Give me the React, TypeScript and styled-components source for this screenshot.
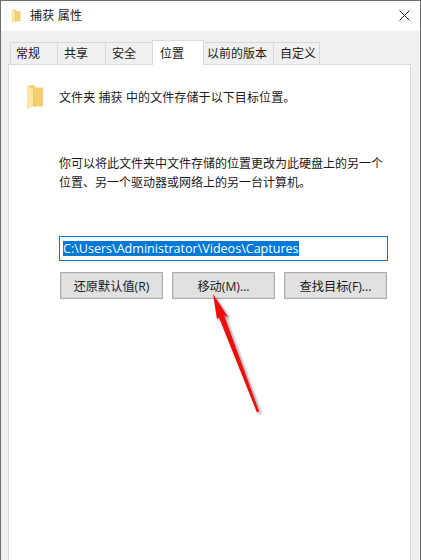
import React from 'react';
import styled, { createGlobalStyle } from 'styled-components';

const GlobalStyle = createGlobalStyle`
  html, body {
    margin: 0;
    padding: 0;
    background: #fff;
  }
`;

const Window = styled.div`
  position: relative;
  width: 421px;
  height: 560px;
  box-sizing: border-box;
  display: flex;
  flex-direction: column;
  overflow: hidden;
  background: #f0f0f0;
  border: 1px solid #6d6d6d;
  border-bottom: none;
  font-family: "Open Sans", "Noto Sans CJK SC", sans-serif;
  font-size: 12px;
  color: #1a1a1a;
`;

const TitleBar = styled.div`
  height: 30px;
  flex: none;
  display: flex;
  align-items: center;
  gap: 9px;
  padding: 0 10px 0 10px;
  background: #fff;
`;

const TitleText = styled.span`
  flex: 1;
  font-size: 12px;
  letter-spacing: 0.2px;
  margin-top: -2px;
`;

const Body = styled.div`
  flex: 1;
  display: flex;
  flex-direction: column;
  padding: 9px 9px 0 7px;
  min-height: 0;
`;

const TabRow = styled.div`
  display: flex;
  align-items: flex-end;
  height: 24px;
  padding-left: 3px;
  flex: none;
`;

const Tab = styled.div<{ $active?: boolean; $width: number; $pad: number }>`
  box-sizing: border-box;
  width: ${p => p.$width}px;
  height: ${p => (p.$active ? 25 : 22)}px;
  display: flex;
  align-items: center;
  padding-left: ${p => p.$pad}px;
  padding-bottom: 1px;
  background: ${p => (p.$active ? '#fff' : '#f0f0f0')};
  border: 1px solid #d9d9d9;
  border-bottom: none;
  margin-left: -1px;
  position: relative;
  z-index: ${p => (p.$active ? 2 : 1)};
  margin-bottom: ${p => (p.$active ? -1 : 0)}px;
`;

const Panel = styled.div`
  flex: 1;
  background: #fff;
  border: 1px solid #d9d9d9;
  border-bottom: none;
  padding: 19px 22px 0 17px;
  display: flex;
  flex-direction: column;
  min-height: 0;
`;

const Header = styled.div`
  display: flex;
  align-items: center;
  gap: 15px;
`;

const HeaderText = styled.span`
  letter-spacing: 0.1px;
`;

const Description = styled.p`
  margin: 44px 0 0 33px;
  line-height: 19px;
`;

const PathField = styled.div`
  box-sizing: border-box;
  margin: 44px 0 0 33px;
  width: 329px;
  height: 25px;
  border: 1px solid #0078d7;
  display: flex;
  align-items: center;
  padding-left: 3px;
  background: #fff;
`;

const PathText = styled.span`
  background: #0078d7;
  color: #fff;
  font-size: 12.55px;
  line-height: 15px;
  white-space: nowrap;
`;

const ButtonRow = styled.div`
  display: flex;
  gap: 9px;
  margin: 11px 0 0 34px;
`;

const Button = styled.div`
  box-sizing: border-box;
  width: 103px;
  height: 27px;
  display: flex;
  align-items: center;
  justify-content: center;
  background: #e1e1e1;
  border: 1px solid #adadad;
  box-shadow: inset 0 0 0 1px #d4d4d4;
  font-size: 12.2px;
  color: #1a1a1a;
`;

const ArrowOverlay = styled.svg`
  position: absolute;
  left: 198px;
  top: 283px;
  pointer-events: none;
`;

const FolderSvg = styled.svg`
  flex: none;
`;

const CloseSvg = styled.svg`
  flex: none;
  margin-top: -2px;
`;

const FolderIcon: React.FC<{ size: number }> = ({ size }) => (
  <FolderSvg width={size} height={size * 1.45} viewBox="0 0 20 29">
    <path d="M1 2 L9 1 L11 4 L19 4 L19 25 L8 25 L8 7 Z" fill="#f4cf72" />
    <path d="M1 2 L8 7 L8 25 L1 28 Z" fill="#fce7a6" />
    <path d="M8 7 L9 7.5 L9 25 L8 25 Z" fill="#e9bd5c" />
  </FolderSvg>
);

const CloseIcon = () => (
  <CloseSvg width="11" height="11" viewBox="0 0 11 11">
    <path d="M0.5 0.5 L10.5 10.5 M10.5 0.5 L0.5 10.5" stroke="#222" strokeWidth="1" fill="none" />
  </CloseSvg>
);

const tabs = [
  { label: '常规', width: 48, pad: 5 },
  { label: '共享', width: 49, pad: 6 },
  { label: '安全', width: 48, pad: 6 },
  { label: '位置', width: 52, pad: 7, active: true },
  { label: '以前的版本', width: 71, pad: 3 },
  { label: '自定义', width: 47, pad: 6 },
];

export default function App() {
  return (
    <>
      <GlobalStyle />
      <Window>
        <TitleBar>
          <FolderIcon size={10} />
          <TitleText>捕获 属性</TitleText>
          <CloseIcon />
        </TitleBar>
        <Body>
          <TabRow>
            {tabs.map(tab => (
              <Tab key={tab.label} $active={tab.active} $width={tab.width} $pad={tab.pad}>
                {tab.label}
              </Tab>
            ))}
          </TabRow>
          <Panel>
            <Header>
              <FolderIcon size={18} />
              <HeaderText>文件夹 捕获 中的文件存储于以下目标位置。</HeaderText>
            </Header>
            <Description>
              你可以将此文件夹中文件存储的位置更改为此硬盘上的另一个
              <br />
              位置、另一个驱动器或网络上的另一台计算机。
            </Description>
            <PathField>
              <PathText>C:\Users\Administrator\Videos\Captures</PathText>
            </PathField>
            <ButtonRow>
              <Button>还原默认值(R)</Button>
              <Button>移动(M)...</Button>
              <Button>查找目标(F)...</Button>
            </ButtonRow>
          </Panel>
        </Body>
        <ArrowOverlay width="70" height="135" viewBox="0 0 70 135">
          <defs>
            <filter id="arrowShadow" x="-30%" y="-10%" width="170%" height="125%">
              <feDropShadow dx="2" dy="2" stdDeviation="1.6" floodColor="#000" floodOpacity="0.45" />
            </filter>
          </defs>
          <path
            d="M14 10 L29 33 L25 31.5 L60 127 L58 128.5 L20 33.5 L18 35 Z"
            fill="#f00808"
            filter="url(#arrowShadow)"
          />
        </ArrowOverlay>
      </Window>
    </>
  );
}
